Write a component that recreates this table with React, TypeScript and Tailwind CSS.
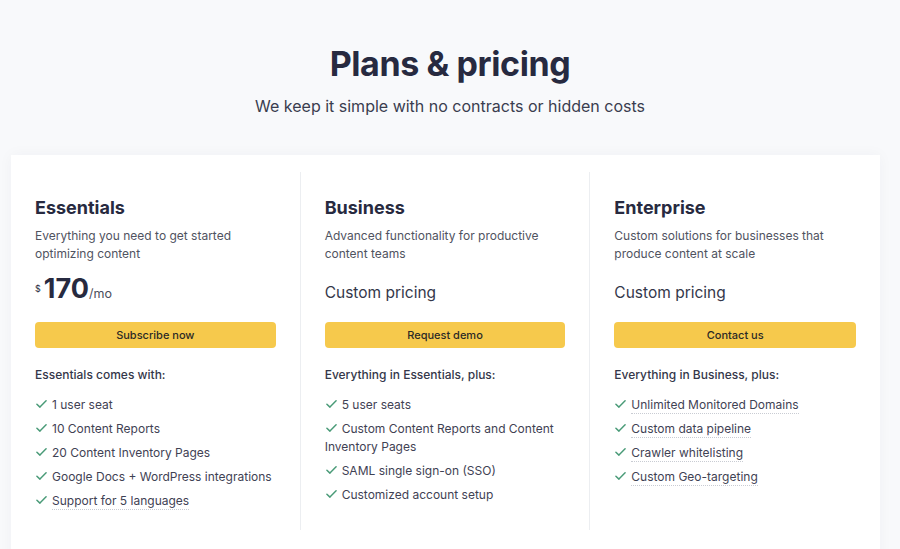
type Feature = { text: string; dotted?: boolean }

type Plan = {
  name: string
  blurb: string
  price?: string
  cta: string
  includes: string
  features: Feature[]
}

const PLANS: Plan[] = [
  {
    name: 'Essentials',
    blurb: 'Everything you need to get started optimizing content',
    price: '170',
    cta: 'Subscribe now',
    includes: 'Essentials comes with:',
    features: [
      { text: '1 user seat' },
      { text: '10 Content Reports' },
      { text: '20 Content Inventory Pages' },
      { text: 'Google Docs + WordPress integrations' },
      { text: 'Support for 5 languages', dotted: true },
    ],
  },
  {
    name: 'Business',
    blurb: 'Advanced functionality for productive content teams',
    cta: 'Request demo',
    includes: 'Everything in Essentials, plus:',
    features: [
      { text: '5 user seats' },
      { text: 'Custom Content Reports and Content Inventory Pages' },
      { text: 'SAML single sign-on (SSO)' },
      { text: 'Customized account setup' },
    ],
  },
  {
    name: 'Enterprise',
    blurb: 'Custom solutions for businesses that produce content at scale',
    cta: 'Contact us',
    includes: 'Everything in Business, plus:',
    features: [
      { text: 'Unlimited Monitored Domains', dotted: true },
      { text: 'Custom data pipeline', dotted: true },
      { text: 'Crawler whitelisting', dotted: true },
      { text: 'Custom Geo-targeting', dotted: true },
    ],
  },
]

function Check() {
  return (
    <svg
      viewBox="0 0 12 10"
      className="mr-[5px] ml-[1px] inline-block h-[10px] w-[11px] align-[0px]"
      fill="none"
      stroke="#4a9b78"
      strokeWidth="1.6"
      strokeLinecap="round"
      strokeLinejoin="round"
    >
      <path d="M1 5.2 4.3 8.4 11 1.4" />
    </svg>
  )
}

function PlanColumn({ plan, last }: { plan: Plan; last: boolean }) {
  return (
    <div
      className={`flex flex-col px-6 pt-[24px] pb-5 ${
        last ? '' : 'border-r border-[#eceef1]'
      }`}
    >
      <h2 className="text-[18px] leading-[24px] font-bold text-[#272a40]">
        {plan.name}
      </h2>
      <p className="mt-[7px] text-[12px] leading-[18px] text-[#50535f]">
        {plan.blurb}
      </p>
      <div className="mt-[10px] flex h-8 items-baseline text-[#272a40]">
        {plan.price ? (
          <>
            <span className="mr-[3px] self-center text-[9px]">$</span>
            <span className="text-[27px] leading-8 font-bold">{plan.price}</span>
            <span className="text-[12.5px] text-[#4a4d5c]">/mo</span>
          </>
        ) : (
          <span className="pt-2 text-[15.5px] leading-6 text-[#34374a]">
            Custom pricing
          </span>
        )}
      </div>
      <button className="mt-[17px] h-[26px] rounded-[4px] bg-[#f6c94c] text-[11px] font-medium text-[#2b2a26]">
        {plan.cta}
      </button>
      <p className="mt-[18px] text-[12px] leading-[18px] font-medium text-[#34374a]">
        {plan.includes}
      </p>
      <ul className="mt-[12px] -mr-2 flex flex-col gap-[6px] text-[12px] leading-[18px] text-[#3f4254]">
        {plan.features.map((f) => (
          <li key={f.text}>
            <Check />
            {f.dotted ? (
              <span className="border-b border-dotted border-[#c9ccd3] pb-[1px]">
                {f.text}
              </span>
            ) : (
              f.text
            )}
          </li>
        ))}
      </ul>
    </div>
  )
}

export default function App() {
  return (
    <div
      className="min-h-screen bg-[#f8f9fb]"
      style={{ fontFamily: 'Inter, "Noto Sans", sans-serif' }}
    >
      <header className="flex flex-col items-center pt-[42px]">
        <h1 className="text-[34px] leading-[44px] font-bold tracking-[-0.4px] text-[#272a40]">
          Plans &amp; pricing
        </h1>
        <p className="mt-2 text-[16px] leading-6 text-[#3a3d4f]">
          We keep it simple with no contracts or hidden costs
        </p>
      </header>

      <div className="mt-[37px] mr-[20px] ml-[11px] bg-white pt-[17px] pb-[40px] shadow-[0_0_14px_rgba(30,40,70,0.04)]">
        <div className="grid grid-cols-3">
          {PLANS.map((p, i) => (
            <PlanColumn key={p.name} plan={p} last={i === PLANS.length - 1} />
          ))}
        </div>
      </div>
    </div>
  )
}
